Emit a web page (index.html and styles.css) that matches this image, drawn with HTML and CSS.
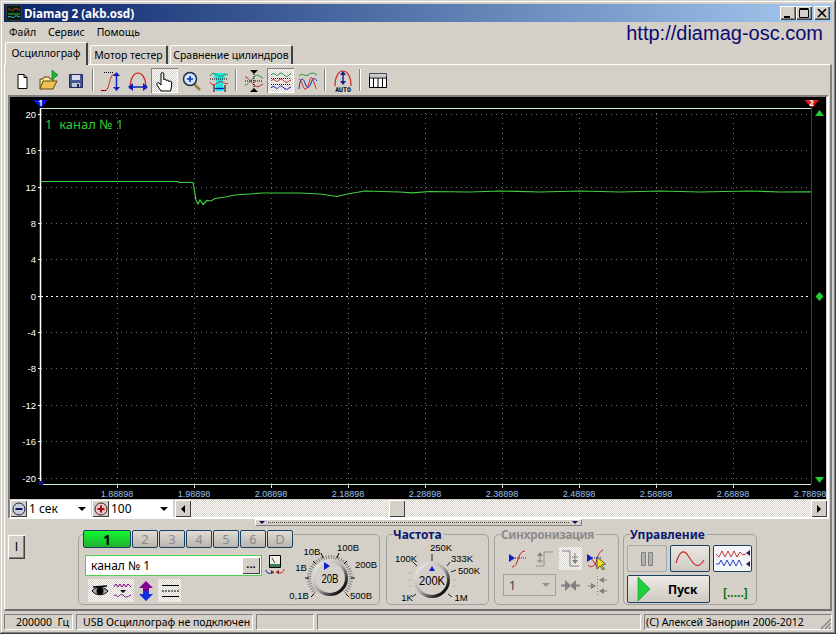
FILE: index.html
```html
<!DOCTYPE html>
<html lang="ru">
<head>
    <meta charset="UTF-8">
    <meta name="viewport" content="width=device-width, initial-scale=1.0">
    <title>Diamag 2 (akb.osd)</title>
    <link rel="stylesheet" href="styles.css">
</head>
<body>
<div class="window">
    <div class="titlebar">
        <svg class="app-icon" width="16" height="16" viewBox="0 0 16 16"><rect width="16" height="16" fill="#3a3a30"/><rect x="1" y="1" width="14" height="14" fill="#0a1a10"/><path d="M2 5c2-3 3 2 5 0s3-2 7 0" fill="none" stroke="#d04030"/><path d="M2 9h12" stroke="#30c040"/><path d="M2 12c3-2 4 2 6 0s3-1 6 0" fill="none" stroke="#40c0e0"/></svg>
        <span class="title-text">Diamag 2 (akb.osd)</span>
        <div class="title-buttons">
            <button class="cap-btn"><svg width="14" height="12" viewBox="0 0 14 12"><path d="M3 9h6v2H3z"/></svg></button>
            <button class="cap-btn"><svg width="14" height="12" viewBox="0 0 14 12"><path d="M2.500 2.500h9v8h-9zM2.500 1.500h9" fill="none" stroke="#000"/></svg></button>
            <button class="cap-btn cap-close"><svg width="14" height="12" viewBox="0 0 14 12"><path d="M3 2l8 8M11 2l-8 8" stroke="#000" stroke-width="1.600"/></svg></button>
        </div>
    </div>

    <div class="menubar">
        <span class="menu-item">Файл</span>
        <span class="menu-item">Сервис</span>
        <span class="menu-item">Помощь</span>
        <span class="site-url">http://diamag-osc.com</span>
    </div>

    <div class="tabs">
        <div class="tab active">Осциллограф</div>
        <div class="tab t-motor">Мотор тестер</div>
        <div class="tab t-compare">Сравнение цилиндров</div>
    </div>

    <div class="page">
        <div class="toolbar">
            <button class="tool"><svg width="24" height="24" viewBox="0 0 24 24"><path d="M8 5.500h6l3 3v11H8z" fill="#fff" stroke="#000"/><path d="M14 5.500v3h3" fill="none" stroke="#000"/></svg></button>
            <button class="tool"><svg width="24" height="24" viewBox="0 0 24 24"><path d="M3 20V10h3l1-2h5l1 2h3v2" fill="#f8e8a0" stroke="#5a4a10"/><path d="M3 20l3-8h14l-4 8z" fill="#f0c050" stroke="#5a4a10"/><path d="M15 1l6 5-6 5z" fill="#20b030" stroke="#107020" stroke-width=".6"/></svg></button>
            <button class="tool"><svg width="24" height="24" viewBox="0 0 24 24"><path d="M5.500 5.500h13v13h-13z" fill="#485890" stroke="#20285a"/><path d="M8 6h8v5H8z" fill="#d8dce8"/><path d="M8 14h8v4H8z" fill="#c0c4d0"/><path d="M13 15h2v3h-2z" fill="#20285a"/></svg></button>
            <span class="tool-sep"></span>
            <button class="tool"><svg width="24" height="24" viewBox="0 0 24 24"><path d="M2 21.500h4c5 0 4-16 9-16h3" fill="none" stroke="#d02020"/><path d="M5 3.500h9M2 21.500h6" stroke="#000" stroke-dasharray="1 1"/><path d="M17.500 5v15" stroke="#1020c0" stroke-width="1.500"/><path d="M14 7l3.500-4 3.500 4zM14 18l3.500 4 3.500-4z" fill="#1020c0"/></svg></button>
            <button class="tool"><svg width="24" height="24" viewBox="0 0 24 24"><path d="M4 20C4 9 8 4 12 4s8 5 8 16" fill="none" stroke="#d02020" stroke-width="1.200"/><path d="M5 18h14" stroke="#1020c0" stroke-width="1.500"/><path d="M7 14l-5 4 5 4zM17 14l5 4-5 4z" fill="#1020c0"/></svg></button>
            <button class="tool tool-on"><svg width="24" height="24" viewBox="0 0 24 24"><path d="M8 22l-4-6c-1-2 1-3 2-2l2 2V5a1.400 1.400 0 0 1 2.800 0v6a1.400 1.400 0 0 1 2.600 0v1a1.400 1.400 0 0 1 2.600 0v1a1.400 1.400 0 0 1 2.600 0v4l-1 5z" fill="#fff" stroke="#000"/></svg></button>
            <button class="tool"><svg width="24" height="24" viewBox="0 0 24 24"><path d="M14 15l6 6" stroke="#a08040" stroke-width="2.500"/><circle cx="10" cy="10" r="6.500" fill="#cfe4f8" stroke="#203050" stroke-width="1.500"/><path d="M7 10h6M10 7v6" stroke="#1030b0" stroke-width="1.600"/></svg></button>
            <button class="tool"><svg width="24" height="24" viewBox="0 0 24 24"><path d="M6 4h13l-3 8v10H9V12z" fill="#20e8e0"/><path d="M3 7c3-5 5-2 9 0s6-4 9-1" fill="none" stroke="#209040"/><path d="M3 13c3 5 5 2 9 0s6 4 9 1" fill="none" stroke="#d02020"/><path d="M3 10h18" stroke="#000" stroke-dasharray="1 1"/><path d="M8 19.500h9" stroke="#1020c0" stroke-width="1.400"/><path d="M7 16v7M18 16v7" stroke="#000"/></svg></button>
            <span class="tool-sep"></span>
            <button class="tool"><svg width="24" height="24" viewBox="0 0 24 24"><path d="M3 8c3 0 5 4 9 8s6 0 9-1" fill="none" stroke="#d02020"/><path d="M3 16c3 0 5-4 9-8s6 0 9 1" fill="none" stroke="#209040"/><path d="M3 12h18" stroke="#000" stroke-dasharray="1 1"/><path d="M12 5v14" stroke="#000" stroke-dasharray="1 1"/><path d="M8 1h8l-4 4zM8 23h8l-4-4z"/></svg></button>
            <button class="tool tool-on"><svg width="24" height="24" viewBox="0 0 24 24"><path d="M2 6c3-4 5 2 7 0s3-3 6 0 4 0 7-1" fill="none" stroke="#209040"/><path d="M2 12c3-4 5 2 7 0s3-3 6 0 4 0 7-1" fill="none" stroke="#d02020"/><path d="M2 19c3-4 5 2 7 0s3-3 6 0 4 0 7-1" fill="none" stroke="#1020c0"/><path d="M2 9.500h20M2 15.500h20" stroke="#000" stroke-dasharray="1 1"/></svg></button>
            <button class="tool"><svg width="24" height="24" viewBox="0 0 24 24"><path d="M3 7c3-4 6 1 9-1s5-3 9 0" fill="none" stroke="#209040"/><path d="M3 20C4 8 7 8 9 14s4 6 6 0 4-5 6-2" fill="none" stroke="#1020c0"/><path d="M3 10c3 0 4 12 7 10s4-14 6-11 3 10 5 11" fill="none" stroke="#d02020"/></svg></button>
            <span class="tool-sep"></span>
            <button class="tool"><svg width="24" height="24" viewBox="0 0 24 24"><path d="M4 17C4 7 8 2 12 2s8 5 8 15" fill="none" stroke="#d02020" stroke-width="1.200"/><path d="M12 5v8" stroke="#102080" stroke-width="1.400"/><path d="M9 6l3-4 3 4zM9 12l3 4 3-4z" fill="#102080"/><text x="12" y="22.500" class="auto-text">AUTO</text></svg></button>
            <span class="tool-sep"></span>
            <button class="tool"><svg width="24" height="24" viewBox="0 0 24 24"><path d="M3.500 4.500h17v14h-17zM3.500 9h17M7.500 9v9.500M12 9v9.500M16.500 9v9.500" fill="#fff" stroke="#000"/><path d="M3 4h18v4H3z" fill="#9098a0" opacity=".5"/></svg></button>
        </div>

        <div class="scope">
            <svg class="scope-plot" width="816" height="402" viewBox="10 97 816 402">
                <g class="grid">
                    <path d="M41 114.500H811M41 150.500H811M41 187.500H811M41 223.500H811M41 259.500H811M41 332.500H811M41 368.500H811M41 405.500H811M41 441.500H811M41 478.500H811"/>
                    <path d="M117.500 108V484M194.500 108V484M271.500 108V484M348.500 108V484M425.500 108V484M502.500 108V484M579.500 108V484M656.500 108V484M733.500 108V484"/>
                </g>
                <path d="M41 296.500H811" stroke="#fff" stroke-dasharray="2 3"/>
                <path d="M41 108.500H811M41 484.500H811" stroke="#cfeccf"/>
                <path d="M40.500 108V484" stroke="#fff" stroke-width="1.500"/>
                <path d="M811.500 108V484" stroke="#a01818"/>
                <path d="M38 114.500h3M38 150.500h3M38 187.500h3M38 223.500h3M38 259.500h3M38 296.500h3M38 332.500h3M38 368.500h3M38 405.500h3M38 441.500h3M38 478.500h3" stroke="#fff"/>
                <path d="M117.500 484v4M194.500 484v4M271.500 484v4M348.500 484v4M425.500 484v4M502.500 484v4M579.500 484v4M656.500 484v4M733.500 484v4" stroke="#cfeccf"/>
                <path d="M41 181.500H178L179 182.500H193L195 194L196 200L198 204L200 200L203 204.500L207 200.500L211 201L215 198.500L225 197L235 195L250 194L262 193L300 193L320 194L337 196.500L350 193.500L365 191L400 192L412 192.800L430 191.500L470 192L500 191L540 192L580 191L620 192L660 191L700 192L750 191L780 192L811 191.800" fill="none" stroke="#3fd03f" stroke-width="1.200"/>
                <text x="45" y="129" class="chan-label" xml:space="preserve">1  канал № 1</text>
                <g class="y-labels">
                    <text x="36" y="118">20</text><text x="36" y="154">16</text><text x="36" y="191">12</text><text x="36" y="227">8</text><text x="36" y="263">4</text><text x="36" y="300">0</text><text x="36" y="336">-4</text><text x="36" y="372">-8</text><text x="36" y="409">-12</text><text x="36" y="445">-16</text><text x="36" y="482">-20</text>
                </g>
                <g class="x-labels">
                    <text x="117" y="497">1.88898</text><text x="194" y="497">1.98898</text><text x="271" y="497">2.08898</text><text x="348" y="497">2.18898</text><text x="425" y="497">2.28898</text><text x="502" y="497">2.38898</text><text x="579" y="497">2.48898</text><text x="656" y="497">2.58898</text><text x="733" y="497">2.68898</text><text x="810" y="497">2.78898</text>
                </g>
                <path d="M33 100h15l-7 8z" fill="#1010d0"/>
                <text x="40.500" y="106" class="marker-num">1</text>
                <path d="M804 100h15l-7 8z" fill="#e01818"/>
                <text x="811.500" y="106" class="marker-num">2</text>
                <path d="M815 116l4.500-6 4.500 6z" fill="#20d030"/>
                <path d="M819.500 292l4 4.500-4 4.500-4-4.500z" fill="#20d030"/>
                <path d="M815 477l4.500 6 4.500-6z" fill="#20d030"/>
                <path d="M39 481h4v4h-4z" fill="#101090"/>
            </svg>
            <div class="scope-controls">
                <button class="round-btn"><svg width="14" height="14" viewBox="0 0 14 14"><circle cx="7" cy="7" r="6" fill="#c8d0e0" stroke="#202040"/><path d="M3.500 7h7" stroke="#101060" stroke-width="2"/></svg></button>
                <div class="combo combo-time"><span>1 сек</span><i class="arrow"></i></div>
                <button class="round-btn"><svg width="14" height="14" viewBox="0 0 14 14"><circle cx="7" cy="7" r="6" fill="#e8c8c8" stroke="#402020"/><path d="M3.500 7h7M7 3.500v7" stroke="#a01010" stroke-width="2"/></svg></button>
                <div class="combo combo-count"><span>100</span><i class="arrow"></i></div>
                <div class="scrollbar">
                    <button class="scroll-btn"><i class="arrow-left"></i></button>
                    <div class="scroll-track"><div class="scroll-thumb"></div></div>
                    <button class="scroll-btn"><i class="arrow-right"></i></button>
                </div>
            </div>
        </div>

        <div class="splitter"><i class="split-arrow"></i><span class="split-dots"></span><i class="split-arrow"></i></div>

        <div class="panels">
            <button class="side-btn">I</button>

            <div class="group group-channel">
                <div class="channel-col">
                    <div class="chan-tabs">
                        <div class="chan-tab on">1</div>
                        <div class="chan-tab">2</div>
                        <div class="chan-tab">3</div>
                        <div class="chan-tab">4</div>
                        <div class="chan-tab">5</div>
                        <div class="chan-tab">6</div>
                        <div class="chan-tab">D</div>
                    </div>
                    <div class="name-row">
                        <div class="name-input"><span>канал № 1</span><button class="dots-btn">...</button></div>
                        <svg width="20" height="20" viewBox="0 0 20 20"><path d="M4.500.5h11v12h-11z" fill="#f0f0e8" stroke="#000"/><path d="M5 9h10v3H5z" fill="#408050"/><path d="M7 3l3 5" stroke="#404040"/><path d="M1 15c0 4 6 4 8 2" fill="none" stroke="#1020a0"/><path d="M11 17c3 2 8 1 8-3" fill="none" stroke="#d02020"/><path d="M6 15l3 2-3 2zM14 15l-3 2 3 2z" fill="#802020"/></svg>
                    </div>
                    <div class="chan-icons">
                        <button class="mini on"><svg width="20" height="18" viewBox="0 0 20 18"><path d="M2 9c4-5 11-5 16 0-4 5-12 5-16 0z" fill="#aaa" stroke="#000"/><circle cx="10" cy="9" r="3.500" fill="#000"/><path d="M3 5l14-1" stroke="#000" stroke-width="1.500"/></svg></button>
                        <button class="mini on"><svg width="20" height="18" viewBox="0 0 20 18"><path d="M1 5l2-3 2 3 2-3 2 3 2-3 2 3 2-3 3 3" fill="none" stroke="#800080"/><path d="M1 14c2-3 3 2 5 0s3-2 5 0 3 1 7-1" fill="none" stroke="#800080"/><path d="M7 8h6l-3 3z"/></svg></button>
                        <button class="mini plain"><svg width="18" height="20" viewBox="0 0 18 20"><path d="M9 0l7 7h-4v3H6V7H2z" fill="#800090"/><path d="M9 20l7-7h-4v-3H6v3H2z" fill="#1030e0"/></svg></button>
                        <button class="mini on"><svg width="20" height="18" viewBox="0 0 20 18"><path d="M2 3.500h17M2 14.500h17" stroke="#000"/><path d="M2 9h17" stroke="#000" stroke-dasharray="2 1"/></svg></button>
                    </div>
                </div>
                <svg class="knob knob-a" width="90" height="58" viewBox="288 548 90 58">
                    <defs>
                        <linearGradient id="ring" x1="0" y1="0" x2="1" y2="1"><stop offset="0" stop-color="#f4f4f0"/><stop offset=".5" stop-color="#aaa"/><stop offset=".85" stop-color="#111"/></linearGradient>
                    </defs>
                    <path d="M315.200 594.800A21 21 0 1 1 344.800 594.800" fill="none" stroke="#808080" stroke-width="4" stroke-dasharray="1 1.500"/>
                    <path d="M314 596l-3 3M346 596l3 3M309 580h-4M351 580h4M323 560l-2-5M337 560l2-5M316 566l-3-3M344 566l3-3" stroke="#000"/>
                    <circle cx="330" cy="580" r="16.500" fill="#d4d0c8" stroke="url(#ring)" stroke-width="3"/>
                    <path d="M324 564l6 4-6 4z" fill="#1020d0"/>
                    <text x="330" y="585" class="knob-val" textLength="17" lengthAdjust="spacingAndGlyphs">20В</text>
                    <text x="312" y="557" class="knob-lab">10В</text>
                    <text x="348" y="553" class="knob-lab">100В</text>
                    <text x="366" y="570" class="knob-lab">200В</text>
                    <text x="301" y="573" class="knob-lab">1В</text>
                    <text x="299" y="601" class="knob-lab">0,1В</text>
                    <text x="361" y="601" class="knob-lab">500В</text>
                </svg>
            </div>

            <div class="group group-freq">
                <span class="group-title">Частота</span>
                <svg class="knob" width="101" height="69" viewBox="387 535 101 69">
                    <path d="M412 586h-4M412 580h-5M412 573h-4M452 586h4M452 580h5" stroke="#b8b8b8"/>
                    <path d="M416 594l-4 3M448 594l4 3M417 566l-4-4M432 561v-7M447 566l3-4M451 572l5-2" stroke="#202020"/>
                    <circle cx="432" cy="580" r="16.500" fill="#d4d0c8" stroke="url(#ring)" stroke-width="3"/>
                    <path d="M429 571l3-5 3 5z" fill="#1020d0"/>
                    <text x="432" y="585" class="knob-val" textLength="26" lengthAdjust="spacingAndGlyphs">200K</text>
                    <text x="441" y="551" class="knob-lab">250K</text>
                    <text x="406" y="562" class="knob-lab">100K</text>
                    <text x="462" y="562" class="knob-lab">333K</text>
                    <text x="469" y="574" class="knob-lab">500K</text>
                    <text x="407" y="601" class="knob-lab">1K</text>
                    <text x="461" y="601" class="knob-lab">1M</text>
                </svg>
            </div>

            <div class="group group-sync">
                <span class="group-title muted">Синхронизация</span>
                <div class="sync-row sync-top">
                    <button class="sync-btn"><svg width="23" height="23" viewBox="0 0 23 23"><path d="M5 20c7 0 5-16 13-16" fill="none" stroke="#d02020"/><path d="M4 11h15" stroke="#1020c0" stroke-dasharray="1 1"/><path d="M2 7l6 4-6 4z" fill="#1020c0"/></svg></button>
                    <button class="sync-btn"><svg width="23" height="23" viewBox="0 0 23 23"><path d="M3 19h8V5h9" fill="none" stroke="#909090"/><path d="M7 6v10" stroke="#808080"/><path d="M4 9l3-4 3 4z" fill="#808080"/><path d="M4 14h6" stroke="#808080"/></svg></button>
                    <button class="sync-btn on"><svg width="23" height="23" viewBox="0 0 23 23"><path d="M3 4h8v15h9" fill="none" stroke="#808080"/><path d="M16 6v10" stroke="#808080"/><path d="M13 13l3 4 3-4z" fill="#808080"/><path d="M13 10h6" stroke="#808080"/></svg></button>
                    <button class="sync-btn"><svg width="23" height="23" viewBox="0 0 23 23"><path d="M3 18c5 5 8-2 9-6s3-8 6-9" fill="none" stroke="#d02020"/><path d="M3 10c4 0 6 6 9 10" fill="none" stroke="#d02020"/><path d="M5 11h11" stroke="#1020c0" stroke-dasharray="1 1"/><path d="M2 7l6 4-6 4z" fill="#1020c0"/><path d="M12 10v12l3-3 3 4 1.500-1-3-4 4-1z" fill="#f0e020" stroke="#000" stroke-width=".6"/></svg></button>
                </div>
                <div class="sync-row">
                    <div class="sync-combo"><span>1</span><i class="arrow grey"></i></div>
                    <button class="sync-btn"><svg width="23" height="23" viewBox="0 0 23 23"><path d="M2 11.500h6M15 11.500h6" stroke="#808080" stroke-width="2"/><path d="M6 6l6 5.500-6 5.500zM17 6l-6 5.500 6 5.500z" fill="#808080"/></svg></button>
                    <button class="sync-btn"><svg width="23" height="23" viewBox="0 0 23 23"><path d="M12.500 2v20" stroke="#808080" stroke-dasharray="1 2"/><path d="M15 6h7M3 12h7M15 17h7" stroke="#808080"/><path d="M14 6l5-3v6zM11 12l-5-3v6zM14 17l5-3v6z" fill="#808080"/></svg></button>
                </div>
            </div>

            <div class="group group-ctrl">
                <span class="group-title">Управление</span>
                <div class="ctrl-row">
                    <button class="ctrl-btn flat"><svg width="18" height="16" viewBox="0 0 18 16"><path d="M3.500 1.500h4v13h-4zM10.500 1.500h4v13h-4z" fill="#b0b0b0" stroke="#808080"/></svg></button>
                    <button class="ctrl-btn"><svg width="30" height="22" viewBox="0 0 30 22"><path d="M1 15C5 2 9 1 14 9s9 13 15 3" fill="none" stroke="#d02020" stroke-width="1.100"/></svg></button>
                    <button class="ctrl-btn white"><svg width="36" height="24" viewBox="0 0 36 24"><path d="M1 7l3 3 3-6 3 6 3-6 3 6 3-6 3 6 3-5 3 3 3-1" fill="none" stroke="#c02020" stroke-width=".9"/><path d="M1 17h3l2-4 3 6 3-6 3 6 3-6 3 6 3-6 3 6" fill="none" stroke="#1030c0" stroke-width=".9"/><path d="M35 3v6l-4-3zM35 14v6l-4-3z" fill="#202060"/></svg></button>
                </div>
                <div class="ctrl-row start-row">
                    <button class="start-btn"><svg width="14" height="26" viewBox="0 0 14 26"><path d="M1 1l12 12L1 25z" fill="#20d040" stroke="#109020" stroke-width=".6"/></svg><span>Пуск</span></button>
                    <span class="status-dots">[.....]</span>
                </div>
            </div>
        </div>
    </div>

    <div class="statusbar">
        <div class="st st-freq">200000&nbsp; Гц</div>
        <div class="st st-usb">USB Осциллограф не подключен</div>
        <div class="st st-a"></div>
        <div class="st st-b"></div>
        <div class="st st-copy">(C) Алексей Занорин 2006-2012</div>
        <svg class="grip" width="12" height="12" viewBox="0 0 12 12"><path d="M11 1L1 11M11 5l-6 6M11 9l-2 2" stroke="#808080" stroke-width="1.200"/></svg>
    </div>
</div>
</body>
</html>
```
FILE: styles.css
```css
* {
    box-sizing: border-box;
}
body {
    margin: 0;
    width: 836px;
    height: 634px;
    overflow: hidden;
    font-family: "Noto Sans", "Liberation Sans", sans-serif;
    font-size: 10.500px;
    color: #000;
    background: #d4d0c8;
}
button {
    font-family: inherit;
    padding: 0;
    border: none;
    background: #d4d0c8;
    display: flex;
    align-items: center;
    justify-content: center;
}
svg {
    display: block;
}
.window {
    width: 836px;
    height: 634px;
    padding: 4px;
    display: flex;
    flex-direction: column;
    box-shadow: inset -1px -1px #404040, inset 1px 1px #d4d0c8, inset -2px -2px #808080, inset 2px 2px #fff;
}
.titlebar {
    height: 18px;
    flex: none;
    display: flex;
    align-items: center;
    padding-left: 2px;
    background: linear-gradient(to right, #0a246a, #a6caf0);
    color: #fff;
}
.title-text {
    margin-left: 2px;
    font-size: 11.600px;
    font-weight: bold;
}
.title-buttons {
    margin-left: auto;
    margin-right: 2px;
    display: flex;
}
.cap-btn {
    width: 16px;
    height: 14px;
    box-shadow: inset 1px 1px #fff, inset -1px -1px #404040, inset -2px -2px #808080;
}
.cap-close {
    margin-left: 2px;
}
.menubar {
    height: 20px;
    flex: none;
    display: flex;
    align-items: center;
    padding-left: 5px;
}
.menu-item {
    margin-right: 12px;
}
.site-url {
    margin-left: auto;
    margin-right: 9px;
    margin-top: 1px;
    font-family: "Liberation Sans", sans-serif;
    font-size: 20px;
    line-height: 20px;
    color: #0a0a70;
}
.tabs {
    height: 22px;
    flex: none;
    display: flex;
    align-items: flex-end;
    padding-left: 1px;
    position: relative;
    z-index: 1;
}
.tab {
    height: 19px;
    margin-right: 2px;
    border: 1px solid #fff;
    border-bottom: none;
    border-right: 2px solid #404040;
    border-radius: 2px 2px 0 0;
    display: flex;
    align-items: center;
    justify-content: center;
    white-space: nowrap;
}
.tab.active {
    width: 83px;
    height: 23px;
    margin-bottom: -1px;
    background: #d4d0c8;
    padding-bottom: 2px;
}
.t-motor {
    width: 78px;
}
.t-compare {
    width: 123px;
}
.page {
    flex: 1;
    min-height: 0;
    display: flex;
    flex-direction: column;
    padding: 0 1px 0 3px;
    border-top: 1px solid #fff;
    border-left: 1px solid #fff;
    border-right: 2px solid #808080;
    border-bottom: 2px solid #707070;
}
.toolbar {
    height: 30px;
    flex: none;
    display: flex;
    padding-top: 3px;
}
.tool {
    width: 27px;
    height: 25px;
}
.tool-on {
    background: repeating-conic-gradient(#fff 0 25%, #d4d0c8 0 50%) 0 0 / 2px 2px;
    box-shadow: inset 1px 1px #808080, inset -1px -1px #fff;
}
.tool-sep {
    width: 8px;
    height: 25px;
    position: relative;
}
.tool-sep::after {
    content: "";
    position: absolute;
    left: 3px;
    top: 1px;
    width: 2px;
    height: 22px;
    background: linear-gradient(to right, #808080 50%, #fff 50%);
}
.auto-text {
    font-family: "DejaVu Sans Mono", monospace;
    font-size: 6.500px;
    font-weight: bold;
    text-anchor: middle;
}
.scope {
    height: 424px;
    flex: none;
    border: 2px solid;
    border-color: #808080 #fff #fff #808080;
}
.scope-plot {
    background: #000;
}
.grid path {
    stroke: #707070;
    stroke-dasharray: 1 4;
    fill: none;
}
.chan-label {
    font-size: 13px;
    fill: #35c835;
}
.y-labels text {
    font-family: "Liberation Sans", sans-serif;
    font-size: 9.500px;
    fill: #fff;
    text-anchor: end;
}
.x-labels text {
    font-family: "Liberation Sans", sans-serif;
    font-size: 9px;
    fill: #9cc0ee;
    text-anchor: middle;
}
.marker-num {
    font-size: 8px;
    font-weight: bold;
    fill: #fff;
    text-anchor: middle;
}
.scope-controls {
    height: 18px;
    display: flex;
    align-items: flex-start;
    padding-top: 1px;
}
.round-btn {
    width: 17px;
    height: 17px;
    flex: none;
    box-shadow: inset 1px 1px #fff, inset -1px -1px #404040;
}
.combo {
    height: 17px;
    flex: none;
    background: #fff;
    display: flex;
    align-items: center;
    padding: 0 5px 0 2px;
    font-size: 12px;
    justify-content: space-between;
    margin-right: 1px;
}
.combo-time {
    width: 64px;
}
.combo-count {
    width: 64px;
}
.arrow {
    width: 0;
    height: 0;
    border-left: 4px solid transparent;
    border-right: 4px solid transparent;
    border-top: 4px solid #000;
}
.arrow.grey {
    border-top-color: #909090;
}
.scrollbar {
    flex: 1;
    height: 17px;
    display: flex;
    margin-left: 1px;
}
.scroll-btn {
    width: 16px;
    height: 17px;
    flex: none;
    box-shadow: inset 1px 1px #fff, inset -1px -1px #404040;
}
.arrow-left {
    border-top: 4px solid transparent;
    border-bottom: 4px solid transparent;
    border-right: 4px solid #000;
}
.arrow-right {
    border-top: 4px solid transparent;
    border-bottom: 4px solid transparent;
    border-left: 4px solid #000;
}
.scroll-track {
    flex: 1;
    padding-left: 198px;
    background: repeating-conic-gradient(#fff 0 25%, #d4d0c8 0 50%) 0 0 / 2px 2px;
}
.scroll-thumb {
    width: 16px;
    height: 17px;
    background: #d4d0c8;
    box-shadow: inset 1px 1px #fff, inset -1px -1px #404040;
}
.splitter {
    width: 327px;
    height: 7px;
    flex: none;
    margin: 0 auto;
    display: flex;
    align-items: center;
    justify-content: space-between;
    padding: 0 3px;
    background: #d4d0c8;
    border: 1px solid;
    border-color: #fff #808080 #808080 #fff;
}
.split-arrow {
    width: 0;
    height: 0;
    border-left: 3px solid transparent;
    border-right: 3px solid transparent;
    border-top: 3px solid #101060;
}
.split-dots {
    flex: 1;
    height: 1px;
    margin: 0 3px;
    background: repeating-linear-gradient(to right, #404040 0 1px, transparent 1px 2px);
}
.panels {
    flex: 1;
    min-height: 0;
    display: flex;
    align-items: flex-start;
    padding-top: 8px;
}
.side-btn {
    width: 17px;
    height: 24px;
    font-family: "Liberation Sans", sans-serif;
    font-size: 12px;
    margin-top: 1px;
    box-shadow: inset 1px 1px #fff, inset -1px -1px #404040, inset -2px -2px #808080;
}
.group {
    height: 71px;
    flex: none;
    position: relative;
    border: 1px solid #a0a0a0;
    border-radius: 5px;
}
.group-title {
    position: absolute;
    left: 6px;
    top: -7px;
    padding-right: 2px;
    font-size: 12px;
    font-weight: bold;
    line-height: 14px;
    color: #0a1a70;
    background: #d4d0c8;
}
.group-title.muted {
    color: #8c8c8c;
    letter-spacing: -0.4px;
}
.group-channel {
    width: 302px;
    margin-left: 53px;
    display: flex;
    padding-left: 4px;
}
.channel-col {
    width: 205px;
    flex: none;
    margin-top: -5px;
}
.chan-tabs {
    width: 211px;
    display: flex;
    gap: 1px;
    background: #d4d0c8;
    position: relative;
}
.chan-tab {
    width: 26px;
    height: 18px;
    border: 1px solid #1c4060;
    border-radius: 2px;
    background: linear-gradient(#e0ddd6, #b8b5ae);
    color: #8a8a8a;
    font-size: 13px;
    display: flex;
    align-items: center;
    justify-content: center;
}
.chan-tab.on {
    width: 48px;
    background: linear-gradient(#10f830, #20b030);
    color: #000;
    font-weight: bold;
    font-size: 14px;
}
.name-row {
    margin: 7px 0 0 2px;
    display: flex;
    gap: 3px;
    align-items: flex-start;
}
.name-input {
    width: 177px;
    height: 21px;
    flex: none;
    border: 1px solid #50d050;
    background: #fff;
    display: flex;
    align-items: center;
    justify-content: space-between;
    padding: 0 1px 0 5px;
    font-size: 12px;
}
.dots-btn {
    width: 18px;
    height: 17px;
    font-weight: bold;
    font-size: 11px;
    line-height: 8px;
    padding-bottom: 4px;
    box-shadow: inset 1px 1px #fff, inset -1px -1px #404040;
}
.chan-icons {
    margin: 3px 0 0 5px;
    display: flex;
    align-items: center;
}
.mini {
    width: 23px;
    height: 23px;
}
.mini.on {
    background: repeating-conic-gradient(#fff 0 25%, #d4d0c8 0 50%) 0 0 / 2px 2px;
}
.mini.plain {
    width: 18px;
    margin: 0 3px;
}
.knob {
    overflow: visible;
}
.knob-a {
    align-self: flex-end;
    flex: none;
}
.knob-val {
    font-family: "Liberation Sans", sans-serif;
    font-size: 13.500px;
    text-anchor: middle;
}
.knob-lab {
    font-family: "Liberation Sans", sans-serif;
    font-size: 9.500px;
    text-anchor: middle;
}
.group-freq {
    width: 103px;
    margin-left: 6px;
}
.group-sync {
    width: 125px;
    margin-left: 5px;
    padding: 12px 0 0 8px;
}
.sync-row {
    display: flex;
    gap: 3px;
}
.sync-top {
    margin-left: 4px;
    margin-bottom: 4px;
}
.sync-btn {
    width: 23px;
    height: 23px;
    flex: none;
}
.sync-btn.on {
    background: repeating-conic-gradient(#fff 0 25%, #d4d0c8 0 50%) 0 0 / 2px 2px;
}
.sync-combo {
    width: 53px;
    height: 22px;
    border: 1px solid #a0a0a0;
    display: flex;
    align-items: center;
    justify-content: space-between;
    padding: 0 5px;
    font-size: 12px;
    color: #404040;
}
.group-ctrl {
    width: 134px;
    margin-left: 4px;
    padding: 10px 0 0 3px;
}
.ctrl-row {
    display: flex;
    gap: 3px;
}
.ctrl-btn {
    width: 40px;
    height: 27px;
    border: 1px solid #1c4060;
    border-radius: 2px;
    background: linear-gradient(#e8e6e0, #cfccc4);
}
.ctrl-btn.flat {
    background: #d4d0c8;
    border-color: #a8a8a8;
}
.ctrl-btn.white {
    width: 39px;
    background: #f4f6fa;
}
.start-row {
    margin-top: 3px;
    align-items: flex-start;
}
.start-btn {
    width: 83px;
    height: 28px;
    border: 1px solid #1c4060;
    border-radius: 2px;
    background: linear-gradient(#eceae4, #cdcac2);
    justify-content: flex-start;
    padding-left: 9px;
    font-size: 12px;
    font-weight: bold;
}
.start-btn span {
    margin-left: 17px;
}
.status-dots {
    margin: 9px 0 0 10px;
    font-size: 12px;
    font-weight: bold;
    color: #107010;
}
.statusbar {
    height: 19px;
    flex: none;
    display: flex;
    align-items: center;
    padding-top: 2px;
    gap: 3px;
    position: relative;
}
.st {
    height: 16px;
    flex: none;
    border: 1px solid;
    border-color: #808080 #fff #fff #808080;
    display: flex;
    align-items: center;
    white-space: nowrap;
}
.st-freq {
    width: 69px;
    justify-content: flex-end;
    padding-right: 3px;
}
.st-usb {
    width: 177px;
    padding-left: 6px;
}
.st-a {
    width: 58px;
}
.st-b {
    width: 324px;
}
.st-copy {
    flex: 1;
    padding-left: 1px;
}
.grip {
    position: absolute;
    right: 0;
    bottom: 0;
}
```
